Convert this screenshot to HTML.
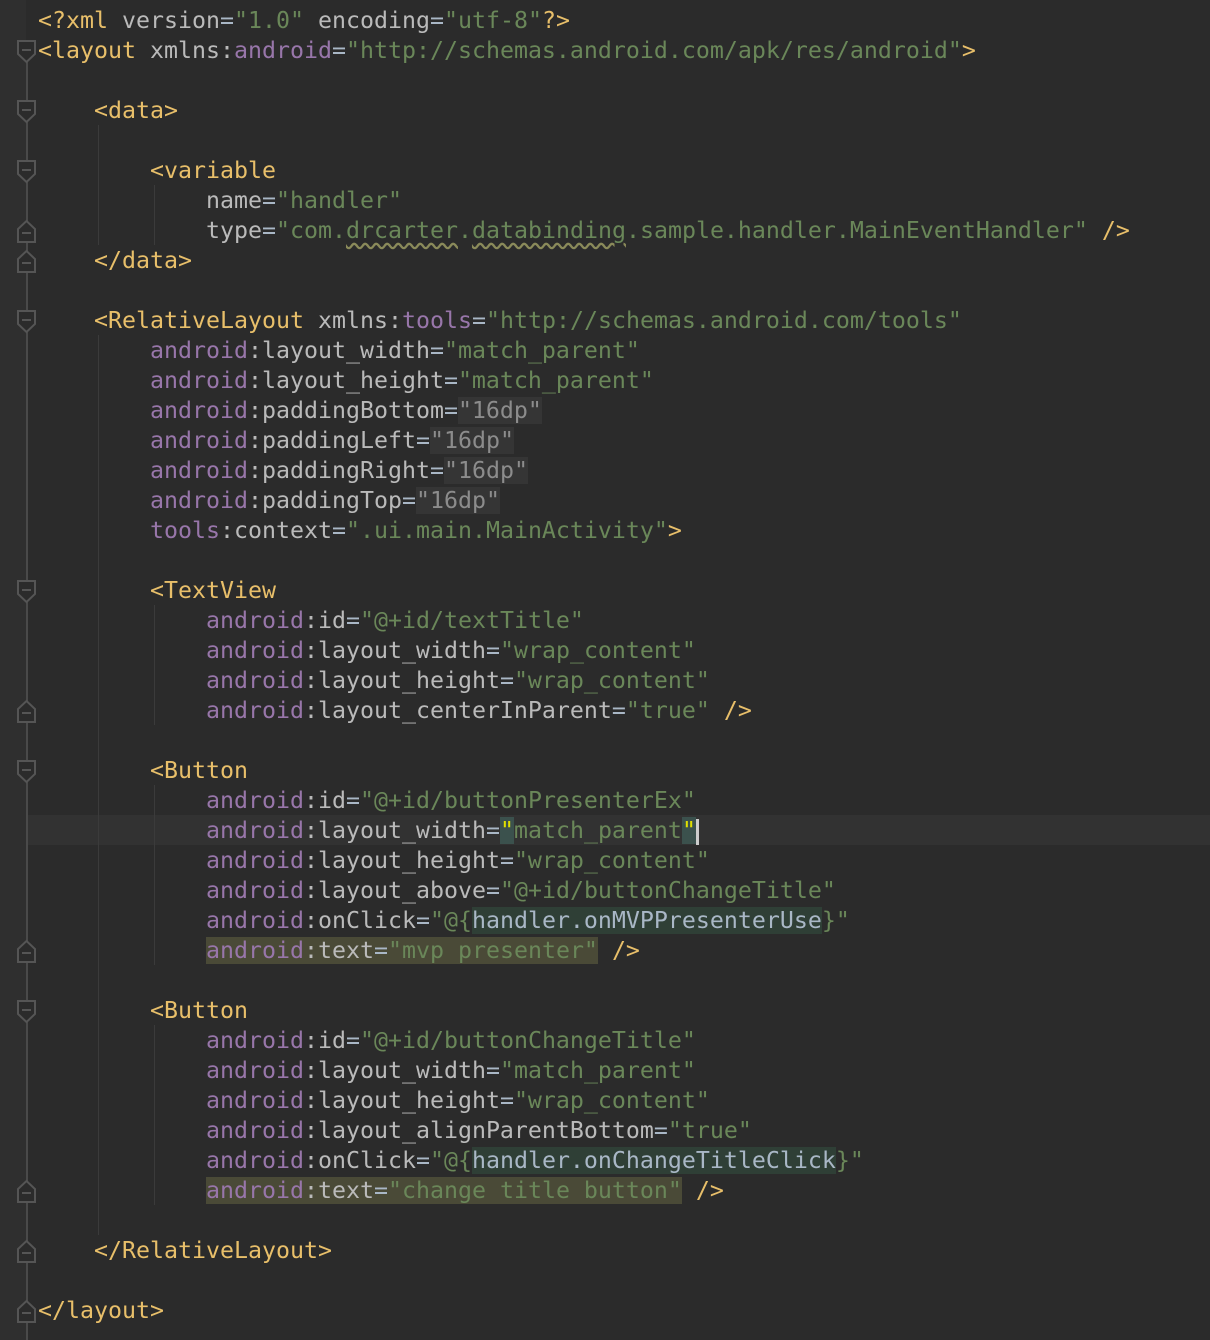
<!DOCTYPE html>
<html><head><meta charset="utf-8"><style>
body{margin:0;width:1210px;height:1340px;background:#2b2b2b;overflow:hidden;position:relative;font-family:"DejaVu Sans Mono","Liberation Mono",monospace;}
.g{position:absolute;left:0;top:0;width:26px;height:1340px;background:#2f2f2f;}
.gl{position:absolute;left:26px;top:40px;width:2px;height:1300px;background:#4a4a4a;}
.l{position:absolute;left:38px;height:30px;line-height:30px;font-size:23.25px;white-space:pre;color:#a9b7c6;margin-top:1px;}
.t{color:#e8bf6a}.a{color:#bababa}.n{color:#9876aa}.s{color:#6a8759}.d{color:#8c8c8c;background:#353535}
.e{background:#2f3f36;color:#a9b7c6}
.h{background:#4a4a37}
.cur{position:absolute;left:28px;top:815px;width:1182px;height:30px;background:#323232;}
.ig{position:absolute;width:1px;background:#3b3b3b;}
.w{text-decoration:underline wavy #8a8a5a;text-underline-offset:4px}
svg.f{position:absolute;left:17px;}
</style></head><body>
<div class="g"></div><div class="cur"></div><div class="gl"></div>
<div class="ig" style="left:98px;top:125px;height:120px"></div>
<div class="ig" style="left:154px;top:185px;height:60px"></div>
<div class="ig" style="left:98px;top:335px;height:900px"></div>
<div class="ig" style="left:154px;top:605px;height:120px"></div>
<div class="ig" style="left:154px;top:785px;height:180px"></div>
<div class="ig" style="left:154px;top:1025px;height:180px"></div>

<svg class="f" style="top:40px" width="20" height="24"><path d="M1 1H18V14L9.5 22L1 14Z" fill="#2b2b2b" stroke="#555" stroke-width="2"/><path d="M5 10H14" stroke="#555" stroke-width="2"/></svg>
<svg class="f" style="top:100px" width="20" height="24"><path d="M1 1H18V14L9.5 22L1 14Z" fill="#2b2b2b" stroke="#555" stroke-width="2"/><path d="M5 10H14" stroke="#555" stroke-width="2"/></svg>
<svg class="f" style="top:160px" width="20" height="24"><path d="M1 1H18V14L9.5 22L1 14Z" fill="#2b2b2b" stroke="#555" stroke-width="2"/><path d="M5 10H14" stroke="#555" stroke-width="2"/></svg>
<svg class="f" style="top:310px" width="20" height="24"><path d="M1 1H18V14L9.5 22L1 14Z" fill="#2b2b2b" stroke="#555" stroke-width="2"/><path d="M5 10H14" stroke="#555" stroke-width="2"/></svg>
<svg class="f" style="top:580px" width="20" height="24"><path d="M1 1H18V14L9.5 22L1 14Z" fill="#2b2b2b" stroke="#555" stroke-width="2"/><path d="M5 10H14" stroke="#555" stroke-width="2"/></svg>
<svg class="f" style="top:760px" width="20" height="24"><path d="M1 1H18V14L9.5 22L1 14Z" fill="#2b2b2b" stroke="#555" stroke-width="2"/><path d="M5 10H14" stroke="#555" stroke-width="2"/></svg>
<svg class="f" style="top:1000px" width="20" height="24"><path d="M1 1H18V14L9.5 22L1 14Z" fill="#2b2b2b" stroke="#555" stroke-width="2"/><path d="M5 10H14" stroke="#555" stroke-width="2"/></svg>

<svg class="f" style="top:219px" width="20" height="24"><path d="M1 23H18V10L9.5 2L1 10Z" fill="#2b2b2b" stroke="#555" stroke-width="2"/><path d="M5 14H14" stroke="#555" stroke-width="2"/></svg>
<svg class="f" style="top:249px" width="20" height="24"><path d="M1 23H18V10L9.5 2L1 10Z" fill="#2b2b2b" stroke="#555" stroke-width="2"/><path d="M5 14H14" stroke="#555" stroke-width="2"/></svg>
<svg class="f" style="top:699px" width="20" height="24"><path d="M1 23H18V10L9.5 2L1 10Z" fill="#2b2b2b" stroke="#555" stroke-width="2"/><path d="M5 14H14" stroke="#555" stroke-width="2"/></svg>
<svg class="f" style="top:939px" width="20" height="24"><path d="M1 23H18V10L9.5 2L1 10Z" fill="#2b2b2b" stroke="#555" stroke-width="2"/><path d="M5 14H14" stroke="#555" stroke-width="2"/></svg>
<svg class="f" style="top:1179px" width="20" height="24"><path d="M1 23H18V10L9.5 2L1 10Z" fill="#2b2b2b" stroke="#555" stroke-width="2"/><path d="M5 14H14" stroke="#555" stroke-width="2"/></svg>
<svg class="f" style="top:1239px" width="20" height="24"><path d="M1 23H18V10L9.5 2L1 10Z" fill="#2b2b2b" stroke="#555" stroke-width="2"/><path d="M5 14H14" stroke="#555" stroke-width="2"/></svg>
<svg class="f" style="top:1299px" width="20" height="24"><path d="M1 23H18V10L9.5 2L1 10Z" fill="#2b2b2b" stroke="#555" stroke-width="2"/><path d="M5 14H14" stroke="#555" stroke-width="2"/></svg>

<div class="l" style="top:5px"><span class="t">&lt;?xml</span> <span class="a">version</span>=<span class="s">"1.0"</span> <span class="a">encoding</span>=<span class="s">"utf-8"</span><span class="t">?&gt;</span></div>
<div class="l" style="top:35px"><span class="t">&lt;layout</span> <span class="a">xmlns:</span><span class="n">android</span>=<span class="s">"http://schemas.android.com/apk/res/android"</span><span class="t">&gt;</span></div>
<div class="l" style="top:95px">    <span class="t">&lt;data&gt;</span></div>
<div class="l" style="top:155px">        <span class="t">&lt;variable</span></div>
<div class="l" style="top:185px">            <span class="a">name</span>=<span class="s">"handler"</span></div>
<div class="l" style="top:215px">            <span class="a">type</span>=<span class="s">"com.<span class="w">drcarter</span>.<span class="w">databinding</span>.sample.handler.MainEventHandler"</span> <span class="t">/&gt;</span></div>
<div class="l" style="top:245px">    <span class="t">&lt;/data&gt;</span></div>
<div class="l" style="top:305px">    <span class="t">&lt;RelativeLayout</span> <span class="a">xmlns:</span><span class="n">tools</span>=<span class="s">"http://schemas.android.com/tools"</span></div>
<div class="l" style="top:335px">        <span class="n">android</span><span class="a">:layout_width</span>=<span class="s">"match_parent"</span></div>
<div class="l" style="top:365px">        <span class="n">android</span><span class="a">:layout_height</span>=<span class="s">"match_parent"</span></div>
<div class="l" style="top:395px">        <span class="n">android</span><span class="a">:paddingBottom</span>=<span class="d">"16dp"</span></div>
<div class="l" style="top:425px">        <span class="n">android</span><span class="a">:paddingLeft</span>=<span class="d">"16dp"</span></div>
<div class="l" style="top:455px">        <span class="n">android</span><span class="a">:paddingRight</span>=<span class="d">"16dp"</span></div>
<div class="l" style="top:485px">        <span class="n">android</span><span class="a">:paddingTop</span>=<span class="d">"16dp"</span></div>
<div class="l" style="top:515px">        <span class="n">tools</span><span class="a">:context</span>=<span class="s">".ui.main.MainActivity"</span><span class="t">&gt;</span></div>
<div class="l" style="top:575px">        <span class="t">&lt;TextView</span></div>
<div class="l" style="top:605px">            <span class="n">android</span><span class="a">:id</span>=<span class="s">"@+id/textTitle"</span></div>
<div class="l" style="top:635px">            <span class="n">android</span><span class="a">:layout_width</span>=<span class="s">"wrap_content"</span></div>
<div class="l" style="top:665px">            <span class="n">android</span><span class="a">:layout_height</span>=<span class="s">"wrap_content"</span></div>
<div class="l" style="top:695px">            <span class="n">android</span><span class="a">:layout_centerInParent</span>=<span class="s">"true"</span> <span class="t">/&gt;</span></div>
<div class="l" style="top:755px">        <span class="t">&lt;Button</span></div>
<div class="l" style="top:785px">            <span class="n">android</span><span class="a">:id</span>=<span class="s">"@+id/buttonPresenterEx"</span></div>
<div class="l" style="top:815px">            <span class="n">android</span><span class="a">:layout_width</span>=<span class="s"><span style="background:#3b514d;color:#e0e000">"</span>match_parent<span style="background:#3b514d;color:#e0e000">"</span></span><span style="display:inline-block;width:3px;height:26px;background:#ccc;vertical-align:middle"></span></div>
<div class="l" style="top:845px">            <span class="n">android</span><span class="a">:layout_height</span>=<span class="s">"wrap_content"</span></div>
<div class="l" style="top:875px">            <span class="n">android</span><span class="a">:layout_above</span>=<span class="s">"@+id/buttonChangeTitle"</span></div>
<div class="l" style="top:905px">            <span class="n">android</span><span class="a">:onClick</span>=<span class="s">"@{</span><span class="e">handler.onMVPPresenterUse</span><span class="s">}"</span></div>
<div class="l" style="top:935px">            <span class="h"><span class="n">android</span><span class="a">:text</span>=<span class="s">"mvp presenter"</span></span> <span class="t">/&gt;</span></div>
<div class="l" style="top:995px">        <span class="t">&lt;Button</span></div>
<div class="l" style="top:1025px">            <span class="n">android</span><span class="a">:id</span>=<span class="s">"@+id/buttonChangeTitle"</span></div>
<div class="l" style="top:1055px">            <span class="n">android</span><span class="a">:layout_width</span>=<span class="s">"match_parent"</span></div>
<div class="l" style="top:1085px">            <span class="n">android</span><span class="a">:layout_height</span>=<span class="s">"wrap_content"</span></div>
<div class="l" style="top:1115px">            <span class="n">android</span><span class="a">:layout_alignParentBottom</span>=<span class="s">"true"</span></div>
<div class="l" style="top:1145px">            <span class="n">android</span><span class="a">:onClick</span>=<span class="s">"@{</span><span class="e">handler.onChangeTitleClick</span><span class="s">}"</span></div>
<div class="l" style="top:1175px">            <span class="h"><span class="n">android</span><span class="a">:text</span>=<span class="s">"change title button"</span></span> <span class="t">/&gt;</span></div>
<div class="l" style="top:1235px">    <span class="t">&lt;/RelativeLayout&gt;</span></div>
<div class="l" style="top:1295px"><span class="t">&lt;/layout&gt;</span></div>
</body></html>
